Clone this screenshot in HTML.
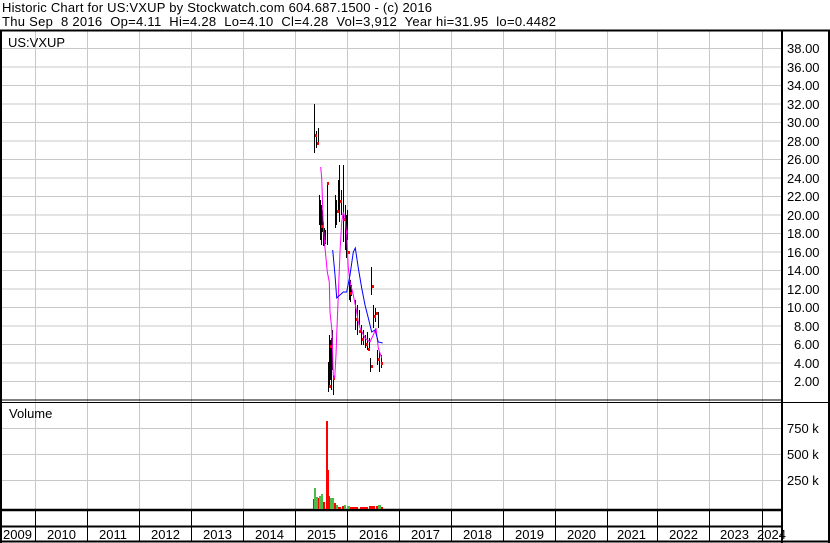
<!DOCTYPE html>
<html><head><meta charset="utf-8"><style>
html,body{margin:0;padding:0;background:#fff;}
svg{display:block;}
text{font-family:"Liberation Sans",Arial,sans-serif;font-size:13px;fill:#000;white-space:pre;}
</style></head><body>
<svg width="830" height="543" viewBox="0 0 830 543" xmlns="http://www.w3.org/2000/svg">
<rect width="830" height="543" fill="#fff"/>
<text x="2" y="12" textLength="430" lengthAdjust="spacing" xml:space="preserve">Historic Chart for US:VXUP by Stockwatch.com 604.687.1500 - (c) 2016</text>
<text x="2" y="26" textLength="554" lengthAdjust="spacing" xml:space="preserve">Thu Sep  8 2016  Op=4.11  Hi=4.28  Lo=4.10  Cl=4.28  Vol=3,912  Year hi=31.95  lo=0.4482</text>
<g stroke="#c8c8c8" stroke-width="1">
<path d="M35.5 31V509M87.5 31V509M139.5 31V509M191.5 31V509M243.5 31V509M295.5 31V509M347.5 31V509M399.5 31V509M451.5 31V509M503.5 31V509M555.5 31V509M607.5 31V509M657.5 31V509M709.5 31V509M762.5 31V509"/>
<path d="M2 48.5H781M2 67H781M2 85.5H781M2 104H781M2 122.5H781M2 141H781M2 159.5H781M2 178H781M2 196.5H781M2 215H781M2 233.5H781M2 252H781M2 270.5H781M2 289H781M2 307.5H781M2 326H781M2 344.5H781M2 363H781M2 381.5H781"/>
<path d="M2 428.5H781M2 454.5H781M2 480.5H781"/>
</g>
<text x="8" y="47">US:VXUP</text>
<text x="9" y="418">Volume</text>
<g stroke="#000" fill="none">
<path d="M0 30.5H830" stroke-width="2"/>
<path d="M1 30V543M829 30V543" stroke-width="2"/>
<path d="M782 30V543" stroke-width="2"/>
<path d="M0 400H782M0 402.5H830" stroke-width="1"/>
<path d="M0 510H782" stroke-width="2.5"/>
<path d="M0 526.5H782" stroke-width="2"/>
<path d="M0 541.5H830" stroke-width="2"/>
<path d="M35.5 511V541M87.5 511V541M139.5 511V541M191.5 511V541M243.5 511V541M295.5 511V541M347.5 511V541M399.5 511V541M451.5 511V541M503.5 511V541M555.5 511V541M607.5 511V541M657.5 511V541M709.5 511V541M762.5 511V541"/>
</g>
<g>
<text x="787" y="53">38.00</text><text x="787" y="72">36.00</text><text x="787" y="90">34.00</text><text x="787" y="109">32.00</text><text x="787" y="127">30.00</text><text x="787" y="146">28.00</text><text x="787" y="164">26.00</text><text x="787" y="183">24.00</text><text x="787" y="201">22.00</text><text x="787" y="220">20.00</text><text x="787" y="238">18.00</text><text x="787" y="257">16.00</text><text x="787" y="275">14.00</text><text x="787" y="294">12.00</text><text x="787" y="312">10.00</text><text x="794" y="331">8.00</text><text x="794" y="349">6.00</text><text x="794" y="368">4.00</text><text x="794" y="386">2.00</text>
<text x="787" y="433">750 k</text><text x="787" y="459">500 k</text><text x="787" y="485">250 k</text>
</g>
<g>
<text x="3" y="539">2009</text><text x="47" y="539">2010</text><text x="99" y="539">2011</text><text x="151" y="539">2012</text><text x="203" y="539">2013</text><text x="255" y="539">2014</text><text x="307" y="539">2015</text><text x="359" y="539">2016</text><text x="411" y="539">2017</text><text x="463" y="539">2018</text><text x="515" y="539">2019</text><text x="567" y="539">2020</text><text x="617" y="539">2021</text><text x="669" y="539">2022</text><text x="720" y="539">2023</text><text x="757" y="539">2024</text>
</g>
<g stroke="#000" stroke-width="1">
<path d="M314.5 104V153M316.5 131V148M318.5 128V145M319.5 195V225M320.5 200V240M321.5 205V245M322.5 210V232M323.5 222V246M324.5 228V246M325.5 230V244M327.5 182V245M329.5 335V385M330.5 340V380M331.5 338V390M332.5 330V370M328.5 362V392M333.5 375V395M335.5 195V228M336.5 200V225M339.5 165V222M338.5 180V210M341.5 190V215M343.5 165V242M345.5 205V250M346.5 215V258M347.5 210V240M349.5 275V300M350.5 280V302M351.5 285V296M355.5 300V330M357.5 305V335M359.5 310V325M361.5 325V345M363.5 330V345M365.5 335V348M367.5 332V350M369.5 338V350M371.5 267V295M373.5 305V328M375.5 308V322M378.5 312V328M370.5 358V372M377.5 350V365M379.5 352V372M381.5 355V368"/>
</g>
<g fill="#f00">
<rect x="315" y="134" width="2" height="3"/><rect x="317" y="142" width="2" height="3"/><rect x="321" y="225" width="2" height="3"/><rect x="324" y="240" width="2" height="3"/><rect x="327" y="182" width="2" height="3"/><rect x="330" y="345" width="2" height="3"/><rect x="333" y="377" width="2" height="3"/><rect x="329" y="385" width="2" height="3"/><rect x="337" y="210" width="2" height="3"/><rect x="340" y="200" width="2" height="3"/><rect x="343" y="218" width="2" height="3"/><rect x="346" y="230" width="2" height="3"/><rect x="348" y="251" width="2" height="3"/><rect x="350" y="292" width="2" height="3"/><rect x="356" y="318" width="2" height="3"/><rect x="359" y="330" width="2" height="3"/><rect x="362" y="338" width="2" height="3"/><rect x="366" y="343" width="2" height="3"/><rect x="368" y="348" width="2" height="3"/><rect x="372" y="285" width="2" height="3"/><rect x="374" y="315" width="2" height="3"/><rect x="371" y="365" width="2" height="3"/><rect x="378" y="358" width="2" height="3"/><rect x="381" y="362" width="2" height="3"/><rect x="376" y="312" width="2" height="3"/>
</g>
<polyline fill="none" stroke="#f0f" stroke-width="1" points="320.7,167 321.7,178 323.3,225 325,248 327.3,272 329.3,282 330,312 331.7,328 332.7,355 333.3,375 334.7,378 336,355 336.7,335 338.3,295 340,252 341.7,222 343.3,212 345,218 346.7,235 348.3,268 350,282 353.3,295 356.7,312 358.3,322 360,328 365,338 370,342 373.3,335 376,328 378.3,348 381.7,358"/>
<polyline fill="none" stroke="#00f" stroke-width="1" points="332.7,250 335,275 336.7,298 340,295 343.3,292 346.7,292 350,275 353.3,252 355.3,248 358.3,268 361.7,288 365,305 368.3,318 371.7,332 375,330 378.3,342 382.7,343"/>
<g fill="#4cbb47">
<rect x="314" y="488" width="2" height="21"/><rect x="316" y="497" width="2" height="12"/><rect x="319" y="496" width="2" height="13"/><rect x="321" y="494" width="2" height="15"/><rect x="330" y="498" width="4" height="11"/><rect x="335" y="505" width="3" height="4"/><rect x="344" y="505" width="2" height="4"/><rect x="347" y="506" width="3" height="3"/><rect x="378" y="505" width="3" height="4"/>
</g>
<g fill="#f00">
<rect x="313" y="499" width="1" height="10"/><rect x="318" y="498" width="1" height="11"/><rect x="323" y="502" width="2" height="7"/><rect x="326" y="421" width="2" height="88"/><rect x="328" y="470" width="1" height="39"/><rect x="329" y="496" width="1" height="13"/><rect x="334" y="503" width="2" height="6"/><rect x="338" y="507" width="3" height="2"/><rect x="342" y="506" width="2" height="3"/><rect x="350" y="507" width="8" height="2"/><rect x="360" y="507" width="8" height="2"/><rect x="369" y="506" width="6" height="3"/><rect x="376" y="506" width="2" height="3"/><rect x="381" y="507" width="2" height="2"/>
</g>
</svg>
</body></html>
